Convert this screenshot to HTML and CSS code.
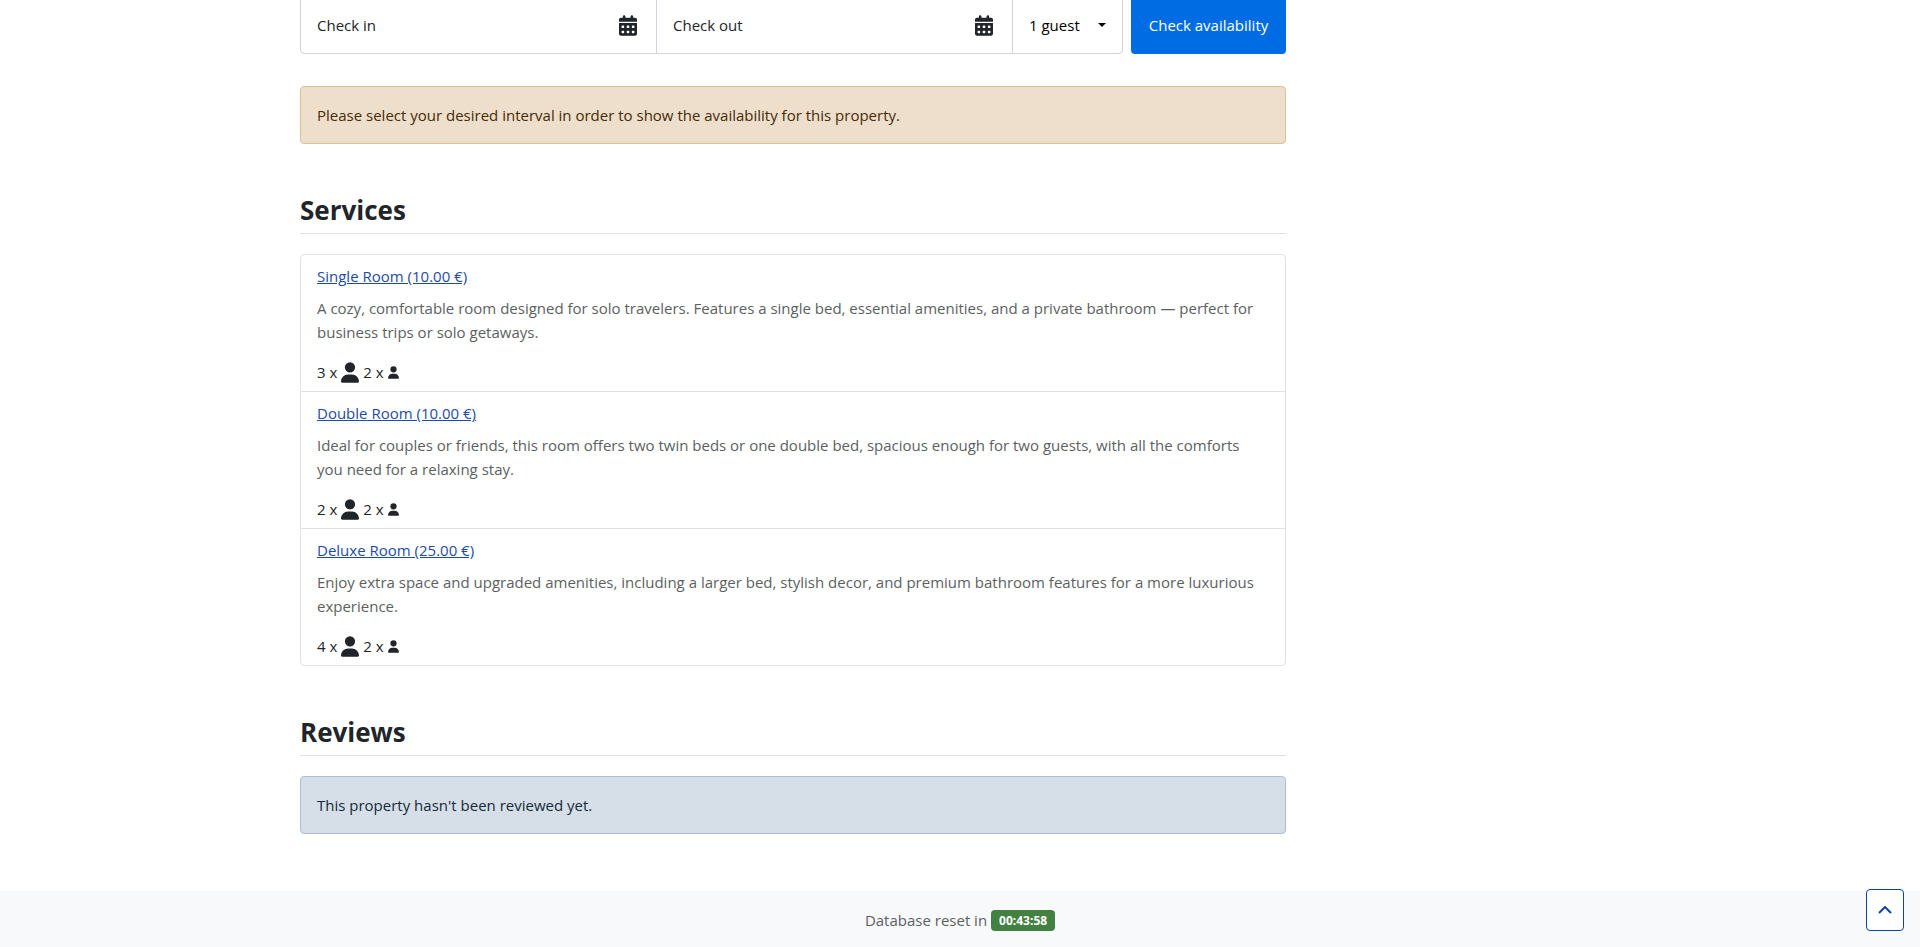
FILE: index.html
```html
<!DOCTYPE html>
<html lang="en">
<head>
    <meta charset="UTF-8">
    <meta name="viewport" content="width=device-width, initial-scale=1.0">
    <title>Property</title>
    <link rel="stylesheet" href="styles.css">
</head>
<body>
    <!-- Shared icons -->
    <svg class="sprite" aria-hidden="true">
        <symbol id="icon-calendar" viewBox="0 0 448 512">
            <path fill-rule="evenodd" d="M128 0c17.700 0 32 14.300 32 32v32h128V32c0-17.700 14.300-32 32-32s32 14.300 32 32v32h48c26.500 0 48 21.500 48 48v48H0v-48c0-26.500 21.500-48 48-48h48V32c0-17.700 14.300-32 32-32zM0 192h448v272c0 26.500-21.500 48-48 48H48c-26.500 0-48-21.500-48-48V192zm64 80v32c0 8.800 7.200 16 16 16h32c8.800 0 16-7.200 16-16v-32c0-8.800-7.200-16-16-16H80c-8.800 0-16 7.200-16 16zm128 0v32c0 8.800 7.200 16 16 16h32c8.800 0 16-7.200 16-16v-32c0-8.800-7.200-16-16-16h-32c-8.800 0-16 7.200-16 16zm144-16c-8.800 0-16 7.200-16 16v32c0 8.800 7.200 16 16 16h32c8.800 0 16-7.200 16-16v-32c0-8.800-7.200-16-16-16h-32zM64 400v32c0 8.800 7.200 16 16 16h32c8.800 0 16-7.200 16-16v-32c0-8.800-7.200-16-16-16H80c-8.800 0-16 7.200-16 16zm144-16c-8.800 0-16 7.200-16 16v32c0 8.800 7.200 16 16 16h32c8.800 0 16-7.200 16-16v-32c0-8.800-7.200-16-16-16h-32zm112 16v32c0 8.800 7.200 16 16 16h32c8.800 0 16-7.200 16-16v-32c0-8.800-7.200-16-16-16h-32c-8.800 0-16 7.200-16 16z"/>
        </symbol>
        <symbol id="icon-user" viewBox="0 0 448 512">
            <path d="M224 256a128 128 0 1 0 0-256 128 128 0 1 0 0 256zM178 304C80 304 0 384 0 482c0 16 13 30 30 30h388c17 0 30-14 30-30 0-98-80-178-178-178z"/>
        </symbol>
    </svg>

    <main class="container">
        <div class="content">
            <form class="search">
                <div class="search-group">
                    <div class="field">
                        <input type="text" id="checkin" placeholder="Check in" aria-label="Check in">
                        <label for="checkin"><svg class="icon" aria-hidden="true"><use href="#icon-calendar"/></svg></label>
                    </div>
                    <div class="field">
                        <input type="text" id="checkout" placeholder="Check out" aria-label="Check out">
                        <label for="checkout"><svg class="icon" aria-hidden="true"><use href="#icon-calendar"/></svg></label>
                    </div>
                    <div class="guests">
                        <select id="guests" aria-label="Guests">
                            <option>1 guest</option>
                        </select>
                    </div>
                </div>
                <button type="submit" class="btn-search">Check availability</button>
            </form>

            <div class="alert alert-warning">Please select your desired interval in order to show the availability for this property.</div>

            <section>
                <h2>Services</h2>
                <ul class="services">
                    <li>
                        <a href="#">Single Room (10.00 €)</a>
                        <p>A cozy, comfortable room designed for solo travelers. Features a single bed, essential amenities, and a private bathroom — perfect for business trips or solo getaways.</p>
                        <div class="capacity">3 x <svg class="icon"><use href="#icon-user"/></svg> 2 x <svg class="icon icon-small"><use href="#icon-user"/></svg></div>
                    </li>
                    <li>
                        <a href="#">Double Room (10.00 €)</a>
                        <p>Ideal for couples or friends, this room offers two twin beds or one double bed, spacious enough for two guests, with all the comforts you need for a relaxing stay.</p>
                        <div class="capacity">2 x <svg class="icon"><use href="#icon-user"/></svg> 2 x <svg class="icon icon-small"><use href="#icon-user"/></svg></div>
                    </li>
                    <li>
                        <a href="#">Deluxe Room (25.00 €)</a>
                        <p>Enjoy extra space and upgraded amenities, including a larger bed, stylish decor, and premium bathroom features for a more luxurious experience.</p>
                        <div class="capacity">4 x <svg class="icon"><use href="#icon-user"/></svg> 2 x <svg class="icon icon-small"><use href="#icon-user"/></svg></div>
                    </li>
                </ul>
            </section>

            <section>
                <h2>Reviews</h2>
                <div class="alert alert-info">This property hasn't been reviewed yet.</div>
            </section>
        </div>
    </main>

    <footer class="footer">
        <span>Database reset in</span>
        <span class="badge">00:43:58</span>
    </footer>

    <button type="button" class="back-to-top" aria-label="Back to top">
        <svg viewBox="0 0 14 8" aria-hidden="true"><path d="M1 7l6-6 6 6"/></svg>
    </button>
</body>
</html>
```

FILE: styles.css
```css
* {
    box-sizing: border-box;
}
body {
    display: flex;
    flex-direction: column;
    min-height: 100vh;
    margin: 0;
    background-color: #fff;
    color: #212529;
    font-family: "Segoe UI", "Open Sans", "Noto Sans", sans-serif;
    font-size: 15px;
    line-height: 24px;
}
input, select, button {
    font: inherit;
    color: inherit;
}
.sprite {
    position: absolute;
    width: 0;
    height: 0;
}
.icon {
    width: 18px;
    height: 21px;
    fill: #212529;
}
.icon-small {
    width: 11px;
    height: 13px;
}
.container {
    display: grid;
    grid-template-columns: repeat(12, 1fr);
    gap: 16px;
    width: 100%;
    max-width: 1320px;
    margin: -4px auto 48px;
}
.content {
    grid-column: span 9;
}

/* Search bar */
.search {
    display: flex;
    gap: 8px;
    height: 58px;
    margin-bottom: 32px;
}
.search-group {
    display: flex;
    flex: 1;
    border: 1px solid #ced4da;
    border-radius: 4px;
}
.field {
    display: flex;
    flex: 1;
    align-items: center;
    padding-right: 19px;
    border-right: 1px solid #ced4da;
}
.field input {
    flex: 1;
    min-width: 0;
    height: 100%;
    padding: 0 16px;
    border: none;
    background: none;
}
.field input::placeholder {
    color: #212529;
    opacity: 1;
}
.field label {
    display: flex;
}
.guests {
    position: relative;
    width: 109px;
}
.guests select {
    width: 100%;
    height: 100%;
    padding: 0 16px;
    border: none;
    background: none;
    color: #000;
    appearance: none;
}
.guests::after {
    content: "";
    position: absolute;
    top: 26px;
    right: 16px;
    border: 4px solid transparent;
    border-top-color: #000;
    border-bottom: none;
    pointer-events: none;
}
.btn-search {
    width: 155px;
    border: none;
    border-radius: 4px;
    background-color: #006ce4;
    color: #fff;
    cursor: pointer;
}

.alert {
    padding: 16px;
    border: 1px solid;
    border-radius: 4px;
}
.alert-warning {
    border-color: #dfbf96;
    background-color: #eedfcc;
    color: #452b06;
}
.alert-info {
    border-color: #a9c0d2;
    background-color: #d6dfe7;
    color: #142a3b;
}

section {
    margin-top: 49px;
}
h2 {
    margin: 0 0 20px;
    padding-bottom: 6px;
    border-bottom: 1px solid #dee2e6;
    font-size: 26px;
    line-height: 34px;
}

/* Room list */
.services {
    margin: 0;
    padding: 0;
    border: 1px solid #dee2e6;
    border-radius: 4px;
    list-style: none;
}
.services li {
    padding: 9px 16px 7px;
}
.services li + li {
    border-top: 1px solid #dee2e6;
}
.services a {
    color: #1d4ba5;
}
.services p {
    margin: 8px 0 16px;
    color: #5c5f62;
}
.capacity {
    display: flex;
    align-items: center;
    gap: 4px;
    height: 24px;
}

.footer {
    display: flex;
    justify-content: center;
    align-items: center;
    gap: 4px;
    height: 56px;
    margin-top: auto;
    padding-top: 2px;
    background-color: #f8f9fb;
    color: #5c5f62;
}
.badge {
    padding: 0 8px;
    border-radius: 4px;
    background-color: #438143;
    color: #fff;
    font-size: 12px;
    font-weight: 700;
    line-height: 21px;
}
.back-to-top {
    position: fixed;
    right: 16px;
    bottom: 16px;
    display: flex;
    justify-content: center;
    align-items: center;
    width: 38px;
    height: 42px;
    padding: 0;
    border: 1px solid #0d459c;
    border-radius: 4px;
    background-color: #fff;
    cursor: pointer;
}
.back-to-top svg {
    width: 14px;
    height: 8px;
    fill: none;
    stroke: #0d459c;
    stroke-width: 2;
}
```
